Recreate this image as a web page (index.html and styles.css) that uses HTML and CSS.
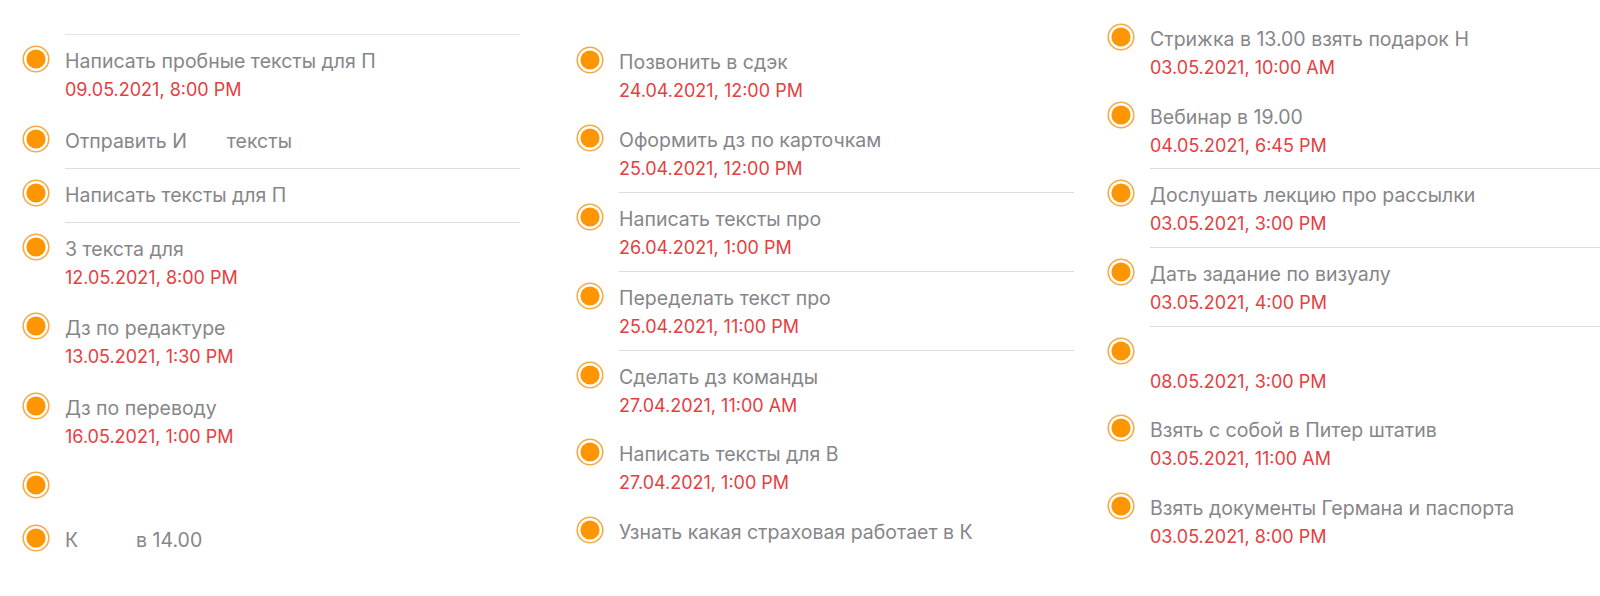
FILE: index.html
```html
<!DOCTYPE html>
<html lang="ru">
<head>
<meta charset="utf-8">
<title>Напоминания</title>
<link rel="stylesheet" href="styles.css">
</head>
<body>
<main class="board">
  <section class="col col-1">
    <div class="top-sep"></div>
    <div class="row">
      <span class="check"><svg viewBox="0 0 28 28"><circle class="ring" cx="14" cy="14" r="12.8"/><circle class="dot" cx="14" cy="14" r="9.6"/></svg></span>
      <div class="body"><div class="title">Написать пробные тексты для П</div><div class="date">09.05.2021, 8:00 PM</div></div>
    </div>
    <div class="row">
      <span class="check"><svg viewBox="0 0 28 28"><circle class="ring" cx="14" cy="14" r="12.8"/><circle class="dot" cx="14" cy="14" r="9.6"/></svg></span>
      <div class="body sep"><div class="title">Отправить И<span class="blank blank-a"></span>тексты</div></div>
    </div>
    <div class="row">
      <span class="check"><svg viewBox="0 0 28 28"><circle class="ring" cx="14" cy="14" r="12.8"/><circle class="dot" cx="14" cy="14" r="9.6"/></svg></span>
      <div class="body sep"><div class="title">Написать тексты для П</div></div>
    </div>
    <div class="row">
      <span class="check"><svg viewBox="0 0 28 28"><circle class="ring" cx="14" cy="14" r="12.8"/><circle class="dot" cx="14" cy="14" r="9.6"/></svg></span>
      <div class="body"><div class="title">3 текста для</div><div class="date">12.05.2021, 8:00 PM</div></div>
    </div>
    <div class="row">
      <span class="check"><svg viewBox="0 0 28 28"><circle class="ring" cx="14" cy="14" r="12.8"/><circle class="dot" cx="14" cy="14" r="9.6"/></svg></span>
      <div class="body"><div class="title">Дз по редактуре</div><div class="date">13.05.2021, 1:30 PM</div></div>
    </div>
    <div class="row">
      <span class="check"><svg viewBox="0 0 28 28"><circle class="ring" cx="14" cy="14" r="12.8"/><circle class="dot" cx="14" cy="14" r="9.6"/></svg></span>
      <div class="body"><div class="title">Дз по переводу</div><div class="date">16.05.2021, 1:00 PM</div></div>
    </div>
    <div class="row">
      <span class="check"><svg viewBox="0 0 28 28"><circle class="ring" cx="14" cy="14" r="12.8"/><circle class="dot" cx="14" cy="14" r="9.6"/></svg></span>
      <div class="body"><div class="title">&nbsp;</div></div>
    </div>
    <div class="row">
      <span class="check"><svg viewBox="0 0 28 28"><circle class="ring" cx="14" cy="14" r="12.8"/><circle class="dot" cx="14" cy="14" r="9.6"/></svg></span>
      <div class="body"><div class="title">К<span class="blank blank-b"></span>в 14.00</div></div>
    </div>
  </section>

  <section class="col col-2">
    <div class="row">
      <span class="check"><svg viewBox="0 0 28 28"><circle class="ring" cx="14" cy="14" r="12.8"/><circle class="dot" cx="14" cy="14" r="9.6"/></svg></span>
      <div class="body"><div class="title">Позвонить в сдэк</div><div class="date">24.04.2021, 12:00 PM</div></div>
    </div>
    <div class="row">
      <span class="check"><svg viewBox="0 0 28 28"><circle class="ring" cx="14" cy="14" r="12.8"/><circle class="dot" cx="14" cy="14" r="9.6"/></svg></span>
      <div class="body sep"><div class="title">Оформить дз по карточкам</div><div class="date">25.04.2021, 12:00 PM</div></div>
    </div>
    <div class="row">
      <span class="check"><svg viewBox="0 0 28 28"><circle class="ring" cx="14" cy="14" r="12.8"/><circle class="dot" cx="14" cy="14" r="9.6"/></svg></span>
      <div class="body sep"><div class="title">Написать тексты про</div><div class="date">26.04.2021, 1:00 PM</div></div>
    </div>
    <div class="row">
      <span class="check"><svg viewBox="0 0 28 28"><circle class="ring" cx="14" cy="14" r="12.8"/><circle class="dot" cx="14" cy="14" r="9.6"/></svg></span>
      <div class="body sep"><div class="title">Переделать текст про</div><div class="date">25.04.2021, 11:00 PM</div></div>
    </div>
    <div class="row">
      <span class="check"><svg viewBox="0 0 28 28"><circle class="ring" cx="14" cy="14" r="12.8"/><circle class="dot" cx="14" cy="14" r="9.6"/></svg></span>
      <div class="body"><div class="title">Сделать дз команды</div><div class="date">27.04.2021, 11:00 AM</div></div>
    </div>
    <div class="row">
      <span class="check"><svg viewBox="0 0 28 28"><circle class="ring" cx="14" cy="14" r="12.8"/><circle class="dot" cx="14" cy="14" r="9.6"/></svg></span>
      <div class="body"><div class="title">Написать тексты для В</div><div class="date">27.04.2021, 1:00 PM</div></div>
    </div>
    <div class="row">
      <span class="check"><svg viewBox="0 0 28 28"><circle class="ring" cx="14" cy="14" r="12.8"/><circle class="dot" cx="14" cy="14" r="9.6"/></svg></span>
      <div class="body"><div class="title">Узнать какая страховая работает в К</div></div>
    </div>
  </section>

  <section class="col col-3">
    <div class="row">
      <span class="check"><svg viewBox="0 0 28 28"><circle class="ring" cx="14" cy="14" r="12.8"/><circle class="dot" cx="14" cy="14" r="9.6"/></svg></span>
      <div class="body"><div class="title">Стрижка в 13.00 взять подарок Н</div><div class="date">03.05.2021, 10:00 AM</div></div>
    </div>
    <div class="row">
      <span class="check"><svg viewBox="0 0 28 28"><circle class="ring" cx="14" cy="14" r="12.8"/><circle class="dot" cx="14" cy="14" r="9.6"/></svg></span>
      <div class="body sep"><div class="title">Вебинар в 19.00</div><div class="date">04.05.2021, 6:45 PM</div></div>
    </div>
    <div class="row">
      <span class="check"><svg viewBox="0 0 28 28"><circle class="ring" cx="14" cy="14" r="12.8"/><circle class="dot" cx="14" cy="14" r="9.6"/></svg></span>
      <div class="body sep"><div class="title">Дослушать лекцию про рассылки</div><div class="date">03.05.2021, 3:00 PM</div></div>
    </div>
    <div class="row">
      <span class="check"><svg viewBox="0 0 28 28"><circle class="ring" cx="14" cy="14" r="12.8"/><circle class="dot" cx="14" cy="14" r="9.6"/></svg></span>
      <div class="body sep"><div class="title">Дать задание по визуалу</div><div class="date">03.05.2021, 4:00 PM</div></div>
    </div>
    <div class="row">
      <span class="check"><svg viewBox="0 0 28 28"><circle class="ring" cx="14" cy="14" r="12.8"/><circle class="dot" cx="14" cy="14" r="9.6"/></svg></span>
      <div class="body"><div class="title">&nbsp;</div><div class="date">08.05.2021, 3:00 PM</div></div>
    </div>
    <div class="row">
      <span class="check"><svg viewBox="0 0 28 28"><circle class="ring" cx="14" cy="14" r="12.8"/><circle class="dot" cx="14" cy="14" r="9.6"/></svg></span>
      <div class="body"><div class="title">Взять с собой в Питер штатив</div><div class="date">03.05.2021, 11:00 AM</div></div>
    </div>
    <div class="row">
      <span class="check"><svg viewBox="0 0 28 28"><circle class="ring" cx="14" cy="14" r="12.8"/><circle class="dot" cx="14" cy="14" r="9.6"/></svg></span>
      <div class="body"><div class="title">Взять документы Германа и паспорта</div><div class="date">03.05.2021, 8:00 PM</div></div>
    </div>
  </section>
</main>
</body>
</html>
```

FILE: styles.css
```css
* { box-sizing: border-box; }

html, body {
  margin: 0;
  padding: 0;
  background: #ffffff;
}

body {
  width: 1600px;
  height: 596px;
  overflow: hidden;
  font-family: Inter, "Noto Sans", "Liberation Sans", sans-serif;
}

.board {
  display: flex;
  align-items: flex-start;
  height: 596px;
  overflow: hidden;
}

.col {
  display: flex;
  flex-direction: column;
  overflow: hidden;
  flex: none;
}

.col-1 {
  width: 550px;
  height: 554px;
  padding: 0 30px 0 22px;
}

.col-2 {
  width: 550px;
  height: 596px;
  padding: 36px 26px 0 26px;
}

.col-3 {
  width: 500px;
  height: 596px;
  padding: 13px 0 0 7px;
}

.top-sep {
  height: 35px;
  margin-left: 43px;
  border-bottom: 1px solid #e3e3e6;
  flex: none;
}

.row {
  display: flex;
  align-items: flex-start;
  flex: none;
}

.check {
  width: 28px;
  height: 28px;
  margin-top: 10px;
  margin-right: 15px;
  flex: none;
}

.check svg {
  display: block;
  width: 28px;
  height: 28px;
}

.ring {
  fill: none;
  stroke: #f6ab45;
  stroke-width: 1.6;
}

.dot {
  fill: #ff9500;
}

.body {
  flex: 1;
  min-width: 0;
  padding: 13px 0 13px;
}

.col-2 .body:has(.date) {
  padding-bottom: 9.4px;
}

.col-3 .body:has(.date) {
  padding-bottom: 9.2px;
}

.col-1 .body {
  padding-bottom: 14px;
}

.col-1 .body:has(.date) {
  padding-bottom: 11px;
}

.body.sep {
  border-bottom: 1px solid #dcdce0;
}

.title {
  font-size: 19.5px;
  line-height: 26px;
  color: #86868a;
  white-space: nowrap;
}

.date {
  padding-top: 3px;
  font-size: 18px;
  line-height: 26.5px;
  color: #e4403f;
  white-space: nowrap;
}

.blank {
  display: inline-block;
}

.blank-a { width: 40px; }
.blank-b { width: 58px; }
```
